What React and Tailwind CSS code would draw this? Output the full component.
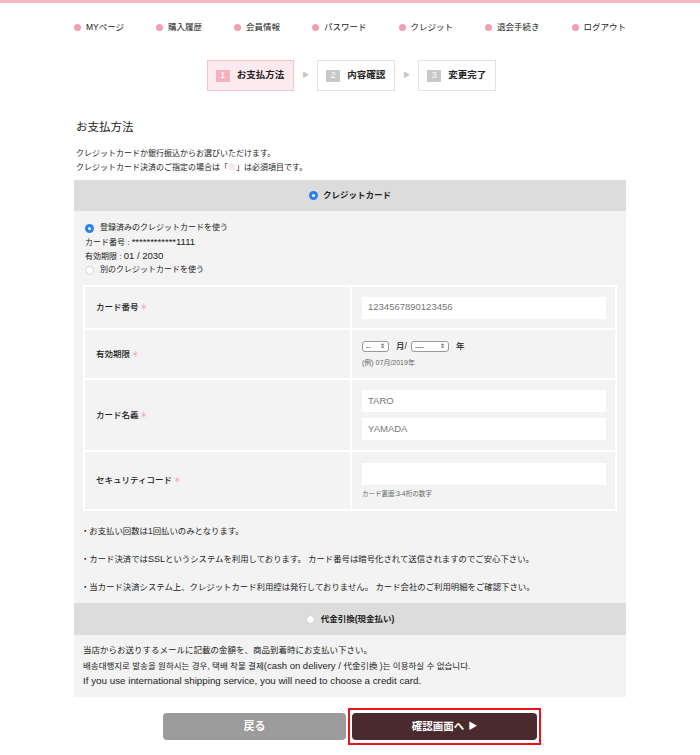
import React from 'react'

const nav = ['MYページ', '購入履歴', '会員情報', 'パスワード', 'クレジット', '退会手続き', 'ログアウト']

function Radio({ checked }) {
  if (checked) {
    return (
      <span className="inline-flex h-[9px] w-[9px] shrink-0 items-center justify-center rounded-full bg-[#2f7ff2]">
        <span className="h-[3px] w-[3px] rounded-full bg-white" />
      </span>
    )
  }
  return <span className="inline-block h-[9px] w-[9px] shrink-0 rounded-full border border-[#cfcfcf] bg-white" />
}

function Step({ n, label, active }) {
  return (
    <div
      className={
        'flex h-[31px] items-center gap-[7px] border pl-[8px] pr-[9px] ' +
        (active ? 'border-[#f6c4cd] bg-[#fdeaee]' : 'border-[#e2e2e2] bg-white')
      }
    >
      <span
        className={
          'flex h-[12px] w-[14px] items-center justify-center text-[9px] leading-none text-white ' +
          (active ? 'bg-[#f4b2bf]' : 'bg-[#c8c8c8]')
        }
      >
        {n}
      </span>
      <span className="text-[9.5px] font-bold text-[#222]">{label}</span>
    </div>
  )
}

function Arrow() {
  return <span className="text-[7px] text-[#c4c4c4]">▶</span>
}

function Label({ children }) {
  return (
    <div className="flex items-center bg-[#f3f3f3] pl-[11px] text-[8.5px] font-medium text-[#222]">
      {children}
      <span className="ml-[1px] text-[#f2a3b3]">＊</span>
    </div>
  )
}

function Input({ value }) {
  return (
    <div className="flex h-[22px] w-[244px] items-center bg-white pl-[6px] text-[9.5px] text-[#777]">
      {value}
    </div>
  )
}

function Select({ w, text }) {
  return (
    <span
      className={
        'inline-flex h-[11px] items-center justify-between rounded-[3px] border border-[#9a9a9a] bg-white px-[3px] text-[7px] leading-none text-[#333] ' +
        w
      }
    >
      <span>{text}</span>
      <span className="text-[6px]">⇕</span>
    </span>
  )
}

export default function App() {
  return (
    <div
      className="min-h-[755px] w-[700px] bg-white text-[#222]"
      style={{ fontFamily: '"Liberation Sans", "Noto Sans CJK JP", "Noto Sans CJK KR", sans-serif' }}
    >
      <div className="h-[3px] bg-[#f5b8c4]" />

      <div className="flex justify-center gap-[32px] pt-[17px]">
        {nav.map((item) => (
          <div key={item} className="flex items-center gap-[5px] text-[8.5px] leading-[14px] text-[#222]">
            <span className="h-[7px] w-[7px] rounded-full bg-[#f0a0b0]" />
            {item}
          </div>
        ))}
      </div>

      <div className="mt-[26px] flex items-center justify-center gap-[8px] pl-[3px]">
        <Step n="1" label="お支払方法" active />
        <Arrow />
        <Step n="2" label="内容確認" />
        <Arrow />
        <Step n="3" label="変更完了" />
      </div>

      <div className="mx-auto w-[552px]">
        <h2 className="mt-[28px] pl-[2px] text-[11.5px] leading-[16px] font-normal">お支払方法</h2>
        <div className="mt-[12px] pl-[2px] text-[8px] leading-[14px]">
          <p>クレジットカードか銀行振込からお選びいただけます。</p>
          <p>
            クレジットカード決済のご指定の場合は「<span className="text-[#f2a3b3]">※</span>」は必須項目です。
          </p>
        </div>

        <div className="mt-[5px] flex h-[31px] items-center justify-center gap-[5px] bg-[#dcdcdc] text-[8.5px] font-bold">
          <Radio checked />
          クレジットカード
        </div>

        <div className="bg-[#f3f3f3] px-[9px] pt-[10px] pb-[9px]">
          <div className="pl-[2px] text-[8px] leading-[14px]">
            <div className="flex h-[14px] items-center gap-[6px]">
              <Radio checked />
              登録済みのクレジットカードを使う
            </div>
            <div className="h-[14px]">
              カード番号 : <span className="text-[9.5px]">************1111</span>
            </div>
            <div className="h-[14px]">
              有効期限 : <span className="text-[9.5px]">01 / 2030</span>
            </div>
            <div className="flex h-[14px] items-center gap-[6px]">
              <Radio />
              別のクレジットカードを使う
            </div>
          </div>

          <div className="mt-[8px] grid grid-cols-[265px_1fr] gap-[2px] bg-white p-[2px]">
            <Label>カード番号</Label>
            <div className="flex h-[41px] items-center bg-[#f3f3f3] pl-[10px]">
              <Input value="1234567890123456" />
            </div>

            <Label>有効期限</Label>
            <div className="flex h-[48px] flex-col justify-center bg-[#f3f3f3] pl-[10px]">
              <div className="flex items-center text-[8.5px] font-medium">
                <Select w="w-[27px]" text="--" />
                <span className="ml-[7px] mr-[4px]">月/</span>
                <Select w="w-[38px]" text="----" />
                <span className="ml-[7px]">年</span>
              </div>
              <div className="mt-[5px] text-[7px] text-[#666]">(例) 07月/2019年</div>
            </div>

            <Label>カード名義</Label>
            <div className="flex h-[70px] flex-col justify-center gap-[6px] bg-[#f3f3f3] pl-[10px]">
              <Input value="TARO" />
              <Input value="YAMADA" />
            </div>

            <Label>セキュリティコード</Label>
            <div className="flex h-[57px] flex-col justify-center bg-[#f3f3f3] pl-[10px]">
              <Input value="" />
              <div className="mt-[4px] text-[6.5px] text-[#666]">カード裏面:3-4桁の数字</div>
            </div>
          </div>

          <div className="mt-[13px] flex flex-col gap-[14px] text-[8.4px] leading-[14px]">
            <p className="-ml-[2px] h-[14px]">・お支払い回数は1回払いのみとなります。</p>
            <p className="-ml-[2px] h-[14px]">
              ・カード決済では<span className="text-[9px]">SSL</span>というシステムを利用しております。 カード番号は暗号化されて送信されますのでご安心下さい。
            </p>
            <p className="-ml-[2px] h-[14px]">
              ・当カード決済システム上、クレジットカード利用控は発行しておりません。 カード会社のご利用明細をご確認下さい。
            </p>
          </div>
        </div>

        <div className="flex h-[32px] items-center justify-center gap-[6px] bg-[#dcdcdc] text-[8.5px] font-bold">
          <Radio />
          代金引換(現金払い)
        </div>

        <div className="bg-[#f3f3f3] px-[9px] pt-[8px] pb-[9px] text-[8.5px] leading-[15px]">
          <p className="h-[15px]">当店からお送りするメールに記載の金額を、商品到着時にお支払い下さい。</p>
          <p className="h-[15px]">
            배송대행지로 발송을 원하시는 경우, 택배 착불 결제<span className="text-[9.5px]">(cash on delivery / </span>代金引換 )는 이용하실 수 없습니다.
          </p>
          <p className="h-[15px] text-[9.8px]">If you use international shipping service, you will need to choose a credit card.</p>
        </div>

        <div className="mt-[11px] flex items-center justify-center gap-[2px] pl-[4px]">
          <button
            type="button"
            className="h-[27px] w-[183px] rounded-[4px] bg-[#9b9b9b] text-[11px] font-bold text-white"
          >
            戻る
          </button>
          <div className="border-2 border-[#e8141c] px-[2px] py-[3px]">
            <button
              type="button"
              className="flex h-[27px] w-[185px] items-center justify-center gap-[4px] rounded-[4px] bg-[#4a2a2c] text-[10.5px] font-bold text-white"
            >
              確認画面へ <span className="text-[9px]">▶</span>
            </button>
          </div>
        </div>
      </div>
    </div>
  )
}
